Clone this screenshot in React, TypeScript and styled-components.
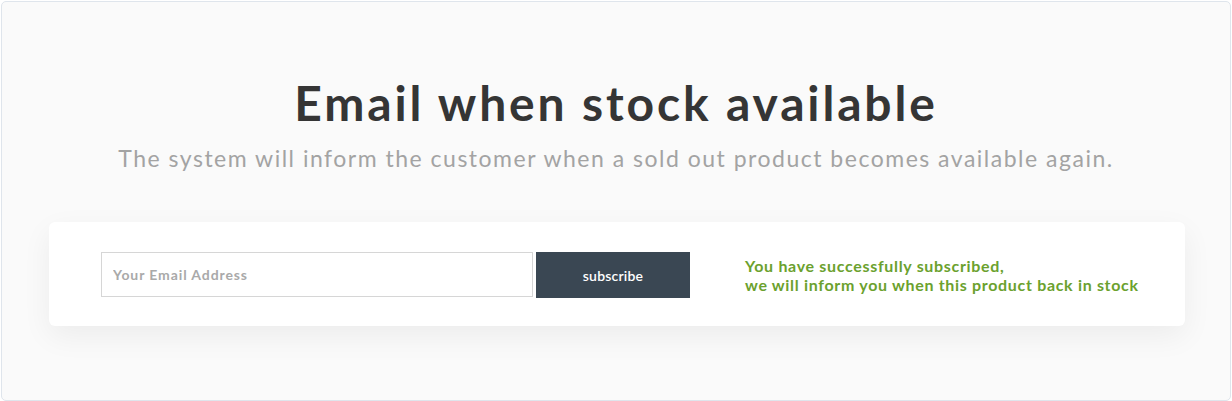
import React from "react";
import styled, { createGlobalStyle } from "styled-components";

const Global = createGlobalStyle`
  html, body { margin: 0; padding: 0; background: #ffffff; }
  body { font-family: "Lato", "Noto Sans", sans-serif; }
  * { box-sizing: border-box; }
`;

const Frame = styled.section`
  margin: 1px;
  width: 1230px;
  height: 400px;
  border: 1px solid #dfe5ec;
  border-radius: 5px;
  background: #fafafa;
  display: flex;
  flex-direction: column;
  align-items: center;
  padding-top: 71px;
`;

const Title = styled.h1`
  margin: 0;
  font-family: "Lato", sans-serif;
  font-weight: 700;
  font-size: 48px;
  line-height: 60px;
  color: #353535;
  letter-spacing: 2.85px;
`;

const Subtitle = styled.p`
  margin: 11px 0 0;
  font-family: "Lato", sans-serif;
  font-weight: 400;
  font-size: 23px;
  line-height: 28px;
  color: #a3a3a3;
  letter-spacing: 1.5px;
`;

const Card = styled.div`
  margin: 50px 0 0 2px;
  width: 1136px;
  height: 104px;
  background: #ffffff;
  border-radius: 6px;
  box-shadow: 0 10px 30px rgba(0, 0, 0, 0.06);
  display: flex;
  align-items: center;
  padding: 0 0 0 52px;
`;

const Form = styled.form`
  display: flex;
  align-items: flex-start;
  gap: 3px;
  margin-top: 2px;
`;

const EmailInput = styled.input`
  width: 432px;
  height: 45px;
  border: 1px solid #d6d6d6;
  padding: 0 11px;
  font-family: "Lato", sans-serif;
  font-weight: 700;
  font-size: 14px;
  letter-spacing: 0.9px;
  color: #333;
  outline: none;
  &::placeholder { color: #a9a9a9; }
`;

const SubscribeButton = styled.button`
  width: 154px;
  height: 46px;
  border: none;
  background: #3a4753;
  color: #ffffff;
  font-family: "Lato", sans-serif;
  font-weight: 600;
  font-size: 14px;
  letter-spacing: 0.2px;
  cursor: pointer;
`;

const Message = styled.p`
  margin: 2px 0 0 55px;
  font-family: "Lato", sans-serif;
  font-weight: 700;
  font-size: 16px;
  line-height: 19px;
  letter-spacing: 0.68px;
  color: #6ba12e;
`;

export default function App() {
  return (
    <>
      <Global />
      <Frame>
        <Title>Email when stock available</Title>
        <Subtitle>
          The system will inform the customer when a sold out product becomes available again.
        </Subtitle>
        <Card>
          <Form onSubmit={(e) => e.preventDefault()}>
            <EmailInput type="email" placeholder="Your Email Address" />
            <SubscribeButton type="submit">subscribe</SubscribeButton>
          </Form>
          <Message>
            You have successfully subscribed,
            <br />
            we will inform you when this product back in stock
          </Message>
        </Card>
      </Frame>
    </>
  );
}
